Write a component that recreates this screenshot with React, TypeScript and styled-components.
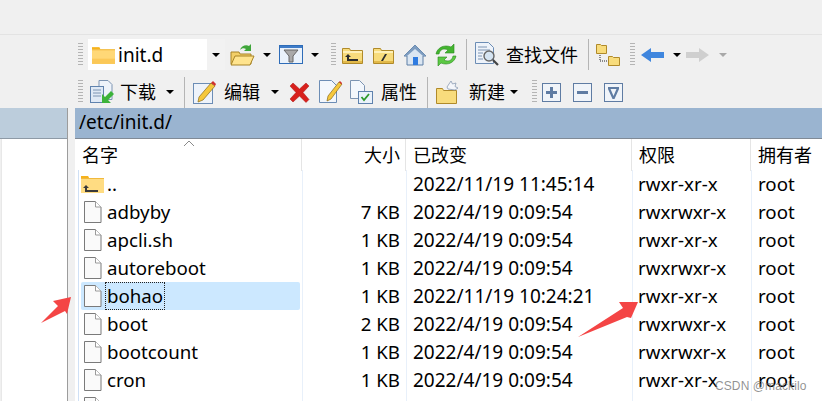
import { createGlobalStyle, styled } from 'styled-components';

const GlobalStyle = createGlobalStyle`
  html, body {
    margin: 0;
    padding: 0;
    background: #f0f0f0;
    overflow: hidden;
  }
`;

const Page = styled.div`
  position: relative;
  width: 822px;
  height: 401px;
  overflow: hidden;
  background: #f0f0f0;
  color: #000;
  font-family: 'Noto Sans', 'Noto Sans CJK SC', sans-serif;
`;

const TopBand = styled.div`
  height: 34px;
  background: #f0f0f0;
  border-bottom: 1px solid #e3e3e3;
`;

const Toolbars = styled.div`
  height: 73px;
  padding-left: 78px;
`;

const BarRow = styled.div<{ $h: number }>`
  display: flex;
  align-items: center;
  height: ${(p) => p.$h}px;
`;

const Slot = styled.div<{ $w: number; $ml?: number }>`
  flex: none;
  display: flex;
  align-items: center;
  justify-content: center;
  width: ${(p) => p.$w}px;
  margin-left: ${(p) => p.$ml ?? 0}px;
`;

const Grip = styled.div<{ $ml?: number }>`
  flex: none;
  width: 5px;
  height: 24px;
  margin-left: ${(p) => p.$ml ?? 0}px;
  background: repeating-linear-gradient(#b4b4b4 0 1px, transparent 1px 3px);
`;

const Sep = styled.div<{ $ml: number }>`
  flex: none;
  width: 1px;
  height: 31px;
  margin-left: ${(p) => p.$ml}px;
  background: #b5b5b5;
`;

const Caret = styled.div<{ $ml: number; $off?: boolean }>`
  flex: none;
  width: 0;
  height: 0;
  margin-left: ${(p) => p.$ml}px;
  border-left: 4px solid transparent;
  border-right: 4px solid transparent;
  border-top: 4px solid ${(p) => (p.$off ? '#a8a8a8' : '#000')};
`;

const Label = styled.span<{ $ml: number }>`
  flex: none;
  margin-left: ${(p) => p.$ml}px;
  font-size: 18px;
  line-height: 24px;
  white-space: nowrap;
`;

const Combo = styled.div`
  flex: none;
  display: flex;
  align-items: center;
  width: 137px;
  height: 31px;
  margin-left: 5px;
  background: #fff;
  box-sizing: border-box;
`;

const ComboText = styled.span`
  margin-left: 3px;
  font-size: 19px;
  line-height: 24px;
`;

const ComboButton = styled.div`
  display: flex;
  align-items: center;
  justify-content: center;
  align-self: stretch;
  width: 18px;
  margin-left: auto;
  background: #f2f2f2;
`;

const Body = styled.div`
  display: flex;
  height: 294px;
`;

const LeftPane = styled.div`
  flex: none;
  display: flex;
  flex-direction: column;
  width: 68px;
  box-sizing: border-box;
  border-right: 1px solid #9c9c9c;
`;

const LeftHead = styled.div`
  flex: none;
  height: 30px;
  background: #bccddc;
  border-bottom: 1px solid #8e9aa6;
`;

const LeftList = styled.div`
  flex: 1;
  background: #fff;
  border-left: 1px solid #e8e8e8;
  margin-left: 1px;
`;

const RightPane = styled.div`
  flex: none;
  display: flex;
  flex-direction: column;
  width: 747px;
  margin-left: 7px;
  background: #fff;
`;

const PathBar = styled.div`
  flex: none;
  height: 30px;
  padding-left: 4px;
  background: #9ab4d0;
  border-bottom: 1px solid #808a96;
  font-size: 19px;
  line-height: 29px;
`;

const Columns = `
  display: grid;
  grid-template-columns: 227px 104px 226px 119px 71px;
`;

const HeaderRow = styled.div`
  ${Columns}
  position: relative;
  height: 31px;
`;

const HeaderCell = styled.div<{ $pl?: number; $right?: boolean; $last?: boolean }>`
  box-sizing: border-box;
  padding-left: ${(p) => p.$pl ?? 7}px;
  padding-right: ${(p) => (p.$right ? 5 : 0)}px;
  text-align: ${(p) => (p.$right ? 'right' : 'left')};
  border-right: ${(p) => (p.$last ? 'none' : '1px solid #e5e5e5')};
  font-size: 18px;
  line-height: 32px;
`;

const SortMark = styled.svg`
  position: absolute;
  left: 108px;
  top: 1px;
`;

const List = styled.div`
  position: relative;
  flex: 1;
  overflow: hidden;
  padding-left: 3px;
  border-left: 0;
`;

const ListEdge = styled.div`
  position: absolute;
  left: 3px;
  top: 0;
  bottom: 0;
  width: 1px;
  background: #cfe0f5;
`;

const Row = styled.div`
  display: grid;
  grid-template-columns: 224px 104px 226px 119px 71px;
  height: 28px;
  font-size: 18.7px;
  line-height: 28px;
`;

const NameCell = styled.div<{ $sel?: boolean }>`
  display: flex;
  align-items: center;
  box-sizing: border-box;
  width: 219px;
  margin-left: 3px;
  border-radius: 2px;
  background: ${(p) => (p.$sel ? '#cce8ff' : 'transparent')};
`;

const IconBox = styled.div<{ $up?: boolean }>`
  flex: none;
  display: flex;
  box-sizing: border-box;
  width: 25px;
  padding-left: ${(p) => (p.$up ? 0 : 3)}px;
`;

const NameText = styled.span<{ $focus?: boolean }>`
  padding: 0 1px;
  height: ${(p) => (p.$focus ? 26 : 28)}px;
  line-height: ${(p) => (p.$focus ? 26 : 28)}px;
  outline: ${(p) => (p.$focus ? '1px dotted #222' : 'none')};
  white-space: nowrap;
`;

const Cell = styled.div<{ $pl?: number; $right?: boolean; $date?: boolean }>`
  box-sizing: border-box;
  padding-left: ${(p) => p.$pl ?? 7}px;
  padding-right: ${(p) => (p.$right ? 6 : 0)}px;
  text-align: ${(p) => (p.$right ? 'right' : 'left')};
  font-size: ${(p) => (p.$date ? 19 : 18.7)}px;
  white-space: nowrap;
`;

const ColumnLine = styled.div<{ $x: number }>`
  position: absolute;
  left: ${(p) => p.$x}px;
  top: 0;
  bottom: 0;
  width: 1px;
  background: #e8f0fa;
`;

const Annotation = styled.svg`
  position: absolute;
  left: 0;
  top: 0;
  pointer-events: none;
`;

const Watermark = styled.div`
  position: absolute;
  left: 715px;
  top: 378px;
  font-family: 'Liberation Sans', sans-serif;
  font-size: 12px;
  line-height: 16px;
  letter-spacing: 0.1px;
  color: rgba(110, 110, 110, 0.75);
`;

const FolderBody = () => (
  <svg width="23" height="18" viewBox="0 0 22 17">
    <path d="M0 1h7l1 2h14v14H0z" fill="#ffd877" />
    <path d="M0 1h7l1 2H0z" fill="#f6b21c" />
    <path d="M0 3h22v1H0z" fill="#f1b93d" />
    <path d="M0 12h22v5H0z" fill="#fbc857" />
  </svg>
);

const UpFolder = () => (
  <svg width="23" height="18" viewBox="0 0 23 18">
    <path d="M0 1h7l1 2h15v15H0z" fill="#ffdc82" />
    <path d="M0 1h7l1 2H0z" fill="#f6b21c" />
    <path d="M0 3h23v1H0z" fill="#f1b93d" />
    <path d="M5 10l-3 3h2v4h13v-2H6v-2h2z" fill="#3a3a3a" />
  </svg>
);

const OpenFolder = () => (
  <svg width="25" height="24" viewBox="0 0 25 24">
    <path d="M1 9h8l1 2h11v10H1z" fill="#f3cf68" stroke="#a88426" />
    <path d="M5 13h19l-4 9H1z" fill="#ffe48e" stroke="#a88426" />
    <path d="M10 7c1-4 6-6 9-4l2-2v7h-7l2-2c-2-1-4-1-6 1z" fill="#3fa63a" />
  </svg>
);

const Filter = () => (
  <svg width="24" height="19" viewBox="0 0 24 19">
    <rect x=".5" y=".5" width="23" height="18" fill="#eaf2fb" stroke="#2e6cb8" />
    <rect x="1" y="1" width="22" height="2" fill="#3f7cc8" />
    <path d="M5 5h14l-5 6v6h-4v-6z" fill="#a9a9a9" stroke="#666" />
  </svg>
);

const NavFolder = ({ glyph }: { glyph: 'up' | 'root' }) => (
  <svg width="21" height="18" viewBox="0 0 21 18">
    <path d="M.5 2.500h7l1 2h12v13H.5z" fill="#f8dc7c" stroke="#b08a2a" />
    <path d="M1 5h19v2H1z" fill="#fff1b8" />
    <path d="M1 15h19v2H1z" fill="#e2b94a" />
    {glyph === 'up' ? (
      <path d="M6 8l-3 3h2v4h11v-2H7v-2h2z" fill="#2c2c2c" />
    ) : (
      <path d="M12 8h2l-4 7H8z" fill="#2c2c2c" />
    )}
  </svg>
);

const Home = () => (
  <svg width="24" height="22" viewBox="0 0 24 22">
    <path d="M12 1L1 12h3v9h16v-9h3z" fill="#dbe6f2" stroke="#5c7fa6" />
    <path d="M12 1L1 12h3l8-7 8 7h3z" fill="#7d9cc0" />
    <rect x="10" y="13" width="5" height="8" fill="#2f7be0" />
  </svg>
);

const Refresh = () => (
  <svg width="24" height="24" viewBox="0 0 24 24">
    <path d="M2 11C3 5 10 1 17 4l3-3v9h-9l3-3c-4-2-8-1-9 4z" fill="#43b52f" stroke="#2a8a1e" strokeWidth=".6" />
    <path d="M22 13c-1 6-8 10-15 7l-3 3v-9h9l-3 3c4 2 8 1 9-4z" fill="#5cc844" stroke="#2a8a1e" strokeWidth=".6" />
  </svg>
);

const FindDoc = () => (
  <svg width="24" height="25" viewBox="0 0 24 25">
    <path d="M.5.500h13l5 5v16H.5z" fill="#eef3fa" stroke="#6c8db5" />
    <path d="M3 5h9M3 8h12M3 11h5M3 14h4M3 17h5" stroke="#7c94b2" />
    <circle cx="14" cy="14" r="5" fill="#d5e4f2" stroke="#666" strokeWidth="1.4" />
    <path d="M18 18l5 5" stroke="#444" strokeWidth="2.2" />
  </svg>
);

const TreeIcon = () => (
  <svg width="24" height="24" viewBox="0 0 24 24">
    <path d="M.5 1.500h4l1 1h5v8H.5z" fill="#f8dc7c" stroke="#b08a2a" />
    <path d="M12.500 13.500h4l1 1h6v8h-11z" fill="#f8dc7c" stroke="#b08a2a" />
    <path d="M4 12v6h8" stroke="#222" strokeDasharray="1 1" fill="none" />
  </svg>
);

const Arrow = ({ off }: { off?: boolean }) => (
  <svg width="24" height="14" viewBox="0 0 24 14">
    {off ? (
      <path d="M0 4h13V0l10 7-10 7v-4H0z" fill="#cfcfcf" />
    ) : (
      <path d="M23 4H10V0L0 7l10 7v-4h13z" fill="#3f86de" />
    )}
  </svg>
);

const Download = () => (
  <svg width="24" height="24" viewBox="0 0 24 24">
    <path d="M9 .5h9l4 4v15H9z" fill="#eef3fa" stroke="#7c94b2" />
    <rect x=".5" y="6.500" width="13" height="16" fill="#dfe9f5" stroke="#5f82ad" />
    <path d="M3 10h8M3 13h8M3 16h8" stroke="#7c94b2" />
    <path d="M21 11l-6 6-3-3v9h9l-3-3 6-6z" fill="#3db33a" />
  </svg>
);

const EditDoc = () => (
  <svg width="24" height="24" viewBox="0 0 24 24">
    <rect x=".5" y="3.500" width="19" height="20" fill="#eef3fa" stroke="#6c8db5" />
    <path d="M18 3l4 3-12 14-5 2 1-5z" fill="#f6c83c" stroke="#8a6a1a" strokeWidth=".7" />
    <path d="M18 3l2-2 3 3-1 2z" fill="#d0312d" />
  </svg>
);

const Cross = () => (
  <svg width="21" height="21" viewBox="0 0 21 21">
    <path d="M4 1l6.500 6L17 1l3 3-6 6.500 6 7-3 3-6.500-6.500L4 20l-3-3 6-6.500L1 4z" fill="#d8201c" stroke="#a81512" strokeWidth=".5" />
  </svg>
);

const NoteEdit = () => (
  <svg width="24" height="24" viewBox="0 0 24 24">
    <path d="M.5.500h12l5 5v17H.5z" fill="#f3f7fc" stroke="#6c8db5" />
    <path d="M20 2l3 2-11 15-4 2 1-5z" fill="#f6c83c" stroke="#8a6a1a" strokeWidth=".7" />
    <path d="M20 2l1-1 2 2-.500 1.500z" fill="#d0312d" />
  </svg>
);

const Props = () => (
  <svg width="23" height="24" viewBox="0 0 23 24">
    <path d="M.5.500h9l5 5v13H.5z" fill="#f3f7fc" stroke="#7c94b2" />
    <rect x="8.500" y="11.500" width="14" height="12" fill="#eaf2fb" stroke="#5f82ad" />
    <path d="M11.500 17l2.500 3 5-6" fill="none" stroke="#2e9a2c" strokeWidth="1.800" />
  </svg>
);

const NewFolder = () => (
  <svg width="22" height="24" viewBox="0 0 22 24">
    <path d="M.5 8.500h6l1 2h13v13H.5z" fill="#f8dc7c" stroke="#b08a2a" />
    <path d="M15 1l1.500 3 3.500-1-1 3.500 3 1.500-3 2-7-1-1-2 2-3z" fill="#f4f6fa" stroke="#8c9cb4" strokeWidth=".8" />
  </svg>
);

const Square = ({ glyph }: { glyph: 'plus' | 'minus' | 'down' }) => (
  <svg width="19" height="19" viewBox="0 0 19 19">
    <rect x=".5" y=".5" width="18" height="18" fill="#f0f4f9" stroke="#5f7ca3" />
    {glyph === 'plus' && <path d="M8 4h3v4h4v3h-4v4H8v-4H4V8h4z" fill="#5f7ca3" />}
    {glyph === 'minus' && <path d="M4 8h11v3H4z" fill="#5f7ca3" />}
    {glyph === 'down' && <path d="M4 4h11v2l-4.500 10h-2L4 6zm2.500 2l3 7 3-7z" fill="#5f7ca3" />}
  </svg>
);

const FileIcon = () => (
  <svg width="18" height="22" viewBox="0 0 18 22">
    <path d="M.5.500h11l5.500 5.500v15.500H.5z" fill="#fafafa" stroke="#7a7a7a" />
    <path d="M11.500.500V6H17" fill="#fff" stroke="#9a9a9a" />
  </svg>
);

type FileRow = {
  name: string;
  size: string;
  date: string;
  perm: string;
  sel?: boolean;
  up?: boolean;
};

const rows: FileRow[] = [
  { name: '..', size: '', date: '2022/11/19 11:45:14', perm: 'rwxr-xr-x', up: true },
  { name: 'adbyby', size: '7 KB', date: '2022/4/19 0:09:54', perm: 'rwxrwxr-x' },
  { name: 'apcli.sh', size: '1 KB', date: '2022/4/19 0:09:54', perm: 'rwxr-xr-x' },
  { name: 'autoreboot', size: '1 KB', date: '2022/4/19 0:09:54', perm: 'rwxrwxr-x' },
  { name: 'bohao', size: '1 KB', date: '2022/11/19 10:24:21', perm: 'rwxr-xr-x', sel: true },
  { name: 'boot', size: '2 KB', date: '2022/4/19 0:09:54', perm: 'rwxrwxr-x' },
  { name: 'bootcount', size: '1 KB', date: '2022/4/19 0:09:54', perm: 'rwxrwxr-x' },
  { name: 'cron', size: '1 KB', date: '2022/4/19 0:09:54', perm: 'rwxr-xr-x' },
];

export default function App() {
  return (
    <Page>
      <GlobalStyle />
      <TopBand />
      <Toolbars>
        <BarRow $h={39}>
          <Grip />
          <Combo>
            <Slot $w={23} $ml={4}>
              <FolderBody />
            </Slot>
            <ComboText>init.d</ComboText>
            <ComboButton>
              <Caret $ml={0} />
            </ComboButton>
          </Combo>
          <Slot $w={25} $ml={5}>
            <OpenFolder />
          </Slot>
          <Caret $ml={8} />
          <Slot $w={24} $ml={8}>
            <Filter />
          </Slot>
          <Caret $ml={8} />
          <Grip $ml={12} />
          <Slot $w={21} $ml={6}>
            <NavFolder glyph="up" />
          </Slot>
          <Slot $w={21} $ml={10}>
            <NavFolder glyph="root" />
          </Slot>
          <Slot $w={24} $ml={9}>
            <Home />
          </Slot>
          <Slot $w={24} $ml={7}>
            <Refresh />
          </Slot>
          <Sep $ml={8} />
          <Slot $w={24} $ml={8}>
            <FindDoc />
          </Slot>
          <Label $ml={7}>查找文件</Label>
          <Sep $ml={10} />
          <Slot $w={24} $ml={7}>
            <TreeIcon />
          </Slot>
          <Grip $ml={10} />
          <Slot $w={24} $ml={6}>
            <Arrow />
          </Slot>
          <Caret $ml={8} />
          <Slot $w={24} $ml={5}>
            <Arrow off />
          </Slot>
          <Caret $ml={9} $off />
        </BarRow>
        <BarRow $h={36}>
          <Grip />
          <Slot $w={24} $ml={7}>
            <Download />
          </Slot>
          <Label $ml={6}>下载</Label>
          <Caret $ml={10} />
          <Sep $ml={10} />
          <Slot $w={24} $ml={8}>
            <EditDoc />
          </Slot>
          <Label $ml={7}>编辑</Label>
          <Caret $ml={11} />
          <Slot $w={21} $ml={10}>
            <Cross />
          </Slot>
          <Slot $w={24} $ml={9}>
            <NoteEdit />
          </Slot>
          <Slot $w={23} $ml={7}>
            <Props />
          </Slot>
          <Label $ml={8}>属性</Label>
          <Sep $ml={10} />
          <Slot $w={22} $ml={8}>
            <NewFolder />
          </Slot>
          <Label $ml={11}>新建</Label>
          <Caret $ml={5} />
          <Grip $ml={14} />
          <Slot $w={19} $ml={5}>
            <Square glyph="plus" />
          </Slot>
          <Slot $w={19} $ml={12}>
            <Square glyph="minus" />
          </Slot>
          <Slot $w={19} $ml={12}>
            <Square glyph="down" />
          </Slot>
        </BarRow>
      </Toolbars>
      <Body>
        <LeftPane>
          <LeftHead />
          <LeftList />
        </LeftPane>
        <RightPane>
          <PathBar>/etc/init.d/</PathBar>
          <HeaderRow>
            <HeaderCell>名字</HeaderCell>
            <HeaderCell $right>大小</HeaderCell>
            <HeaderCell>已改变</HeaderCell>
            <HeaderCell>权限</HeaderCell>
            <HeaderCell $last>拥有者</HeaderCell>
            <SortMark width="12" height="7" viewBox="0 0 12 7">
              <path d="M1 6l5-5 5 5" fill="none" stroke="#8a8a8a" />
            </SortMark>
          </HeaderRow>
          <List>
            <ListEdge />
            <ColumnLine $x={227} />
            <ColumnLine $x={331} />
            <ColumnLine $x={557} />
            <ColumnLine $x={676} />
            {rows.map((r) => (
              <Row key={r.name}>
                <NameCell $sel={r.sel}>
                  <IconBox $up={r.up}>{r.up ? <UpFolder /> : <FileIcon />}</IconBox>
                  <NameText $focus={r.sel}>{r.name}</NameText>
                </NameCell>
                <Cell $right>{r.size}</Cell>
                <Cell $date>{r.date}</Cell>
                <Cell $pl={6}>{r.perm}</Cell>
                <Cell>root</Cell>
              </Row>
            ))}
            <Row>
              <NameCell>
                <IconBox>
                  <FileIcon />
                </IconBox>
              </NameCell>
            </Row>
          </List>
        </RightPane>
      </Body>
      <Annotation width="822" height="401" viewBox="0 0 822 401">
        <path d="M71 297L53 301l5 5-17 17 24-12 2 3z" fill="#f44545" />
        <path d="M638 302h-19l4 6-45 29 49-20 4 1z" fill="#f44545" />
      </Annotation>
      <Watermark>CSDN @mackilo</Watermark>
    </Page>
  );
}
